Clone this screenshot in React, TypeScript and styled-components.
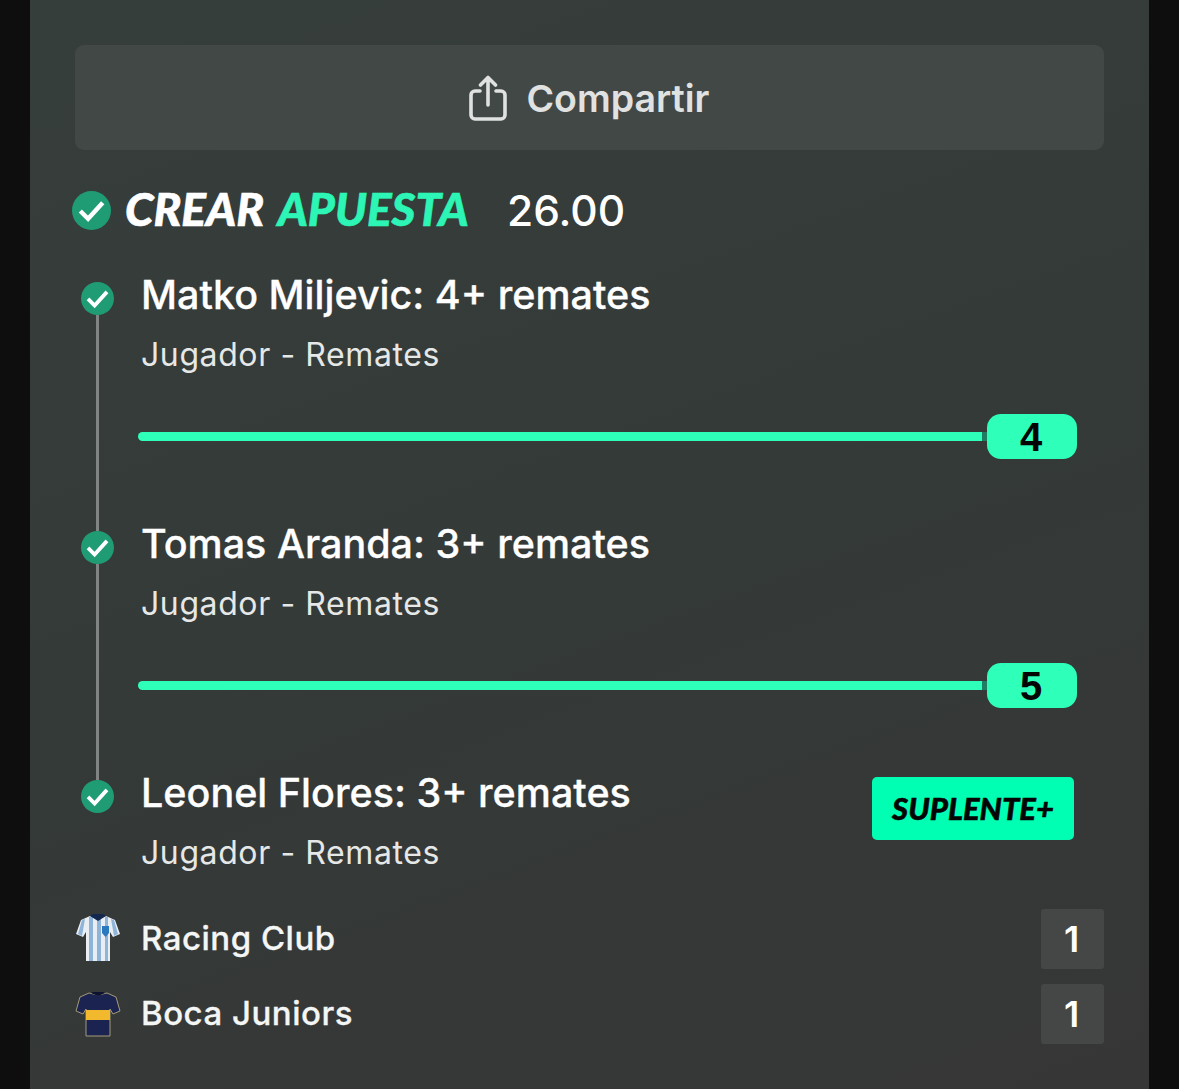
import styled, { createGlobalStyle } from 'styled-components'

const Global = createGlobalStyle`
	html, body {
		margin: 0;
		padding: 0;
		background: #0e0e0e;
	}
	body {
		font-family: Inter, 'Liberation Sans', sans-serif;
	}
`

const legs = [
	{ title: 'Matko Miljevic: 4+ remates', value: 4 },
	{ title: 'Tomas Aranda: 3+ remates', value: 5 },
	{ title: 'Leonel Flores: 3+ remates', badge: true },
]

const Check = ({ size }: { size: number }) => (
	<svg width={size} height={size} viewBox='0 0 40 40'>
		<circle cx='20' cy='20' r='20' fill='#1f9c74' />
		<path d='M8.500 20.500l8 8L31.500 12' fill='none' stroke='#fff' strokeWidth='4.600' />
	</svg>
)

const ShareIcon = () => (
	<svg width='38' height='46' viewBox='0 0 38 46' fill='none' stroke='#e0e2e1' strokeWidth='3.600' strokeLinecap='round' strokeLinejoin='round'>
		<path d='M11 16H6a4 4 0 0 0-4 4v20a4 4 0 0 0 4 4h26a4 4 0 0 0 4-4V20a4 4 0 0 0-4-4h-5' />
		<path d='M19 30V3M11.500 10L19 2.500 26.500 10' />
	</svg>
)

const RacingShirt = () => (
	<svg width='46' height='50' viewBox='0 0 46 50'>
		<path d='M15 3l-9 4L1 21l7 3 3-5v29h24V19l3 5 7-3-5-14-9-4-8 3z' fill='#e9eef3' />
		<path d='M14 4h4v44h-4zM22 5h4v43h-4zM30 4h3v44h-3zM7 7l3-1-3 17-4-2zM39 7l-3-1 3 17 4-2z' fill='#8fb4da' />
		<path d='M15 3l8 5 8-5-3-2h-10z' fill='#14284f' />
		<path d='M27 13h7v7l-3.500 4-3.500-4z' fill='#2a78bd' />
	</svg>
)

const BocaShirt = () => (
	<svg width='46' height='50' viewBox='0 0 46 50'>
		<g transform='translate(0 2)'>
			<path d='M14 3L5 7 1 21l7 3 3-5v27h24V19l3 5 7-3-4-14-9-4-9 2z' fill='#1b2450' stroke='#a49a78' strokeWidth='1' />
			<path d='M11 20h24v10H11z' fill='#f2b92f' />
			<path d='M16 3l7 3 7-3-2-1H18z' fill='#0d1230' />
		</g>
	</svg>
)

export default function App() {
	return (
		<Page>
			<Global />
			<Panel>
				<ShareButton>
					<ShareIcon />
					<span>Compartir</span>
				</ShareButton>
				<Header>
					<Check size={39} />
					<Heading>
						CREAR <em>APUESTA</em>
					</Heading>
					<Odds>26.00</Odds>
				</Header>
				<Legs>
					{legs.map((leg, index) => (
						<Leg key={leg.title} $last={index === legs.length - 1}>
							<Marker>
								<Check size={33} />
							</Marker>
							<LegBody>
								<LegTitle>{leg.title}</LegTitle>
								<LegSub>Jugador - Remates</LegSub>
								{leg.value && (
									<Slider>
										<Track />
										<Notch />
										<Thumb>{leg.value}</Thumb>
									</Slider>
								)}
							</LegBody>
							{leg.badge && <Badge>SUPLENTE+</Badge>}
						</Leg>
					))}
				</Legs>
				<Teams>
					<Team>
						<Shirt>
							<RacingShirt />
						</Shirt>
						<TeamName>Racing Club</TeamName>
						<Score>1</Score>
					</Team>
					<Team>
						<Shirt>
							<BocaShirt />
						</Shirt>
						<TeamName>Boca Juniors</TeamName>
						<Score>1</Score>
					</Team>
				</Teams>
			</Panel>
		</Page>
	)
}

const Page = styled.div`
	width: 1179px;
	height: 1089px;
	padding: 0 30px;
	box-sizing: border-box;
	background: #0e0e0e;
	overflow: hidden;
`
const Panel = styled.div`
	height: 100%;
	box-sizing: border-box;
	padding: 45px 45px 0;
	background: linear-gradient(160deg, #363e3b 0%, #343a38 50%, #363636 100%);
`
const ShareButton = styled.div`
	height: 105px;
	display: flex;
	align-items: center;
	justify-content: center;
	gap: 19px;
	border-radius: 9px;
	background: #424846;
	color: #e0e2e1;
	font-size: 37.500px;
	font-weight: 600;
	span {
		margin-bottom: -1px;
	}
`
const Header = styled.div`
	height: 39px;
	margin: 41px 0 0 -3px;
	display: flex;
	align-items: center;
`
const Heading = styled.div`
	margin-left: 14px;
	margin-bottom: 5px;
	width: 383px;
	font-family: Lato, sans-serif;
	font-size: 46px;
	font-weight: 900;
	font-style: italic;
	word-spacing: 5px;
	-webkit-text-stroke: 0.6px currentColor;
	color: #fff;
	white-space: pre;
	em {
		color: #2cf5b5;
	}
`
const Odds = styled.div`
	margin-bottom: 1px;
	margin-left: -1px;
	font-size: 42.500px;
	font-weight: 500;
	color: #fff;
`
const Legs = styled.div`
	margin-top: 52px;
`
const Leg = styled.div<{ $last?: boolean }>`
	position: relative;
	display: flex;
	justify-content: space-between;
	height: ${p => (p.$last ? '130px' : '249px')};
	padding-left: 67px;
	&::before {
		content: '';
		display: ${p => (p.$last ? 'none' : 'block')};
		position: absolute;
		left: 21px;
		top: 33px;
		width: 3px;
		height: 216px;
		background: #808583;
	}
`
const Marker = styled.div`
	position: absolute;
	left: 6px;
	top: 0;
	height: 33px;
`
const LegBody = styled.div`
	flex: 1;
	margin-top: -9px;
`
const LegTitle = styled.div`
	margin-left: -1px;
	font-size: 39.500px;
	line-height: 45px;
	font-weight: 500;
	-webkit-text-stroke: 0.3px currentColor;
	color: #fff;
`
const LegSub = styled.div`
	margin: 18px 0 0 -1px;
	font-size: 32px;
	line-height: 38px;
	letter-spacing: 0.6px;
	color: #e6e8e7;
`
const Slider = styled.div`
	margin: 40px 0 0 -4px;
	width: 939px;
	height: 45px;
	display: flex;
	align-items: center;
`
const Track = styled.div`
	width: 844px;
	height: 9px;
	border-radius: 5px 0 0 5px;
	background: #2effb9;
`
const Notch = styled.div`
	width: 5px;
	height: 9px;
	background: #1f7d63;
`
const Thumb = styled.div`
	width: 90px;
	height: 45px;
	box-sizing: border-box;
	padding-right: 2px;
	border-radius: 14px;
	background: #2effb9;
	color: #050505;
	font-family: 'Liberation Sans', sans-serif;
	font-size: 40px;
	font-weight: 700;
	line-height: 46px;
	text-align: center;
`
const Badge = styled.div`
	width: 202px;
	height: 63px;
	margin: -3px 30px 0 0;
	border-radius: 5px;
	background: #00ffb3;
	color: #050505;
	font-family: Lato, sans-serif;
	font-size: 31px;
	font-weight: 900;
	font-style: italic;
	-webkit-text-stroke: 0.5px currentColor;
	line-height: 62px;
	text-align: center;
`
const Teams = styled.div`
	margin-top: -1px;
	display: flex;
	flex-direction: column;
	gap: 15px;
`
const Team = styled.div`
	height: 60px;
	display: flex;
	align-items: center;
`
const Shirt = styled.div`
	width: 66px;
	height: 50px;
	margin-top: -2px;
`
const TeamName = styled.div`
	flex: 1;
	margin-bottom: 2px;
	font-size: 33px;
	font-weight: 500;
	-webkit-text-stroke: 0.3px currentColor;
	letter-spacing: 0.5px;
	color: #f4f5f5;
`
const Score = styled.div`
	width: 63px;
	height: 60px;
	box-sizing: border-box;
	padding-right: 2px;
	border-radius: 3px;
	background: #454746;
	color: #fff;
	font-size: 36px;
	font-weight: 600;
	line-height: 60px;
	text-align: center;
`
